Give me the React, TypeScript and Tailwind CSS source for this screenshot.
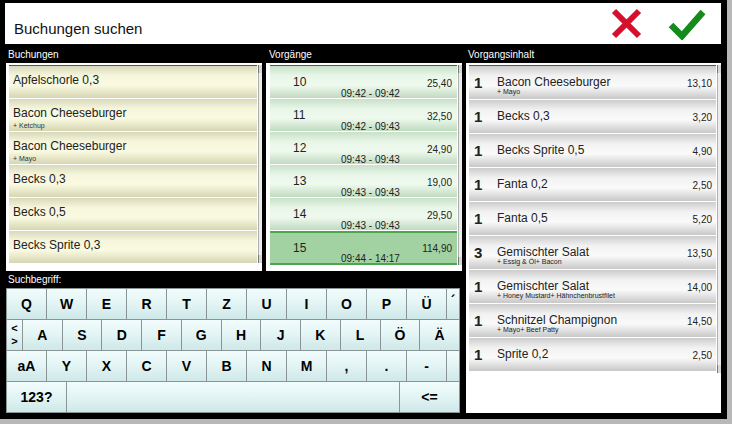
const bookings = [
  { name: "Apfelschorle 0,3" },
  { name: "Bacon Cheeseburger", sub: "+ Ketchup" },
  { name: "Bacon Cheeseburger", sub: "+ Mayo" },
  { name: "Becks 0,3" },
  { name: "Becks 0,5" },
  { name: "Becks Sprite 0,3" },
];

const orders = [
  { nr: "10", time: "09:42 - 09:42", sum: "25,40" },
  { nr: "11", time: "09:42 - 09:43", sum: "32,50" },
  { nr: "12", time: "09:43 - 09:43", sum: "24,90" },
  { nr: "13", time: "09:43 - 09:43", sum: "19,00" },
  { nr: "14", time: "09:43 - 09:43", sum: "29,50" },
  { nr: "15", time: "09:44 - 14:17", sum: "114,90", active: true },
];

const lines = [
  { qty: "1", name: "Bacon Cheeseburger", sub: "+ Mayo", price: "13,10" },
  { qty: "1", name: "Becks 0,3", price: "3,20" },
  { qty: "1", name: "Becks Sprite 0,5", price: "4,90" },
  { qty: "1", name: "Fanta 0,2", price: "2,50" },
  { qty: "1", name: "Fanta 0,5", price: "5,20" },
  { qty: "3", name: "Gemischter Salat", sub: "+ Essig & Öl+ Bacon", price: "13,50" },
  { qty: "1", name: "Gemischter Salat", sub: "+ Honey Mustard+ Hähnchenbrustfilet", price: "14,00" },
  { qty: "1", name: "Schnitzel Champignon", sub: "+ Mayo+ Beef Patty", price: "14,50" },
  { qty: "1", name: "Sprite 0,2", price: "2,50" },
];

const row1 = ["Q", "W", "E", "R", "T", "Z", "U", "I", "O", "P", "Ü"];
const row2 = ["A", "S", "D", "F", "G", "H", "J", "K", "L", "Ö", "Ä"];
const row3 = ["aA", "Y", "X", "C", "V", "B", "N", "M", ",", ".", "-"];

function Key({ label, className }: { label: string; className: string }) {
  return (
    <div
      className={
        "flex h-full items-center justify-center border-r border-b border-[#8a9696] bg-[linear-gradient(to_bottom,#f2fcfc,#e2f4f4_50%,#cfe8e8)] text-[14px] font-bold text-black " +
        className
      }
    >
      {label}
    </div>
  );
}

function Scrollbar() {
  return (
    <div className="ml-[1px] flex h-full w-[4px] flex-col">
      <div className="h-[8px] border-l border-[#777] bg-[#d8d8d8]" />
      <div className="flex-1 border-l border-[#b0b0b0] bg-[#ececec]" />
      <div className="h-[8px] border-l border-[#777] bg-[#d8d8d8]" />
    </div>
  );
}

export default function App() {
  return (
    <div className="h-[424px] w-[732px] overflow-hidden bg-[#b8b8b8] font-['Liberation_Sans',Arial,sans-serif]">
      <div className="flex h-[419px] w-[727px] flex-col bg-black pt-[3px] pl-[5px]">
        <div className="flex h-[41px] w-[716px] items-center bg-white">
          <span className="ml-[9px] mt-[11px] text-[15px] text-[#111]">Buchungen suchen</span>
          <div className="ml-auto mr-[15px] flex items-center gap-[26px]">
            <svg width="31" height="31" viewBox="0 0 31 31">
              <path d="M3 3 L28 28 M28 3 L3 28" stroke="#d4102c" strokeWidth="6" />
            </svg>
            <svg width="38" height="32" viewBox="0 0 38 32">
              <path d="M3 17 L14 28 L35 4" stroke="#168a1c" strokeWidth="6.5" fill="none" />
            </svg>
          </div>
        </div>

        <div className="flex flex-1 pl-[1px]">
          <div className="flex w-[456px] flex-col">
            <div className="flex gap-[4px]">
              <div className="flex w-[256px] flex-col">
                <div className="flex h-[19px] items-center pl-[2px] pt-[1px] text-[10px] text-white">Buchungen</div>
                <div className="flex h-[208px] bg-white pl-[3px] pt-[2px] pb-[8px]">
                  <div className="w-[248px] border-t border-[#555]">
                    {bookings.map((b, i) => (
                      <div
                        key={i}
                        className="h-[33px] border-b border-white bg-[linear-gradient(to_bottom,#d8d8bc,#f6f6dc_30%,#fafae2_60%,#d6d6b2)] pl-[4px] pt-[7px]"
                      >
                        <div className="text-[12px] leading-[15px] text-[#222]">{b.name}</div>
                        {b.sub && <div className="text-[7px] leading-[9px] text-[#333]">{b.sub}</div>}
                      </div>
                    ))}
                  </div>
                  <Scrollbar />
                </div>
              </div>
              <div className="flex w-[196px] flex-col">
                <div className="flex h-[19px] items-center pl-[3px] pt-[1px] text-[10px] text-white">Vorgänge</div>
                <div className="flex h-[208px] bg-white pl-[4px] pt-[2px] pb-[6px]">
                  <div className="w-[187px] border-t border-[#555]">
                    {orders.map((o) =>
                      o.active ? (
                        <div
                          key={o.nr}
                          className="relative h-[34px] border-y-2 border-[#4ea64e] bg-[#a2d2a2] text-[#222]"
                        >
                          <span className="absolute left-[23px] top-[6px] text-[12px]">{o.nr}</span>
                          <span className="absolute right-[5px] top-[8px] text-[10px]">{o.sum}</span>
                          <span className="absolute left-[71px] top-[18px] text-[10px]">{o.time}</span>
                        </div>
                      ) : (
                        <div
                          key={o.nr}
                          className="relative h-[33px] border-b border-white bg-[linear-gradient(to_bottom,#c8e0c8,#e8f6e8_30%,#eefaee_60%,#c0dac0)] text-[#222]"
                        >
                          <span className="absolute left-[23px] top-[7px] text-[12px]">{o.nr}</span>
                          <span className="absolute right-[5px] top-[10px] text-[10px]">{o.sum}</span>
                          <span className="absolute left-[71px] top-[20px] text-[10px]">{o.time}</span>
                        </div>
                      )
                    )}
                  </div>
                  <Scrollbar />
                </div>
              </div>
            </div>

            <div className="flex h-[17px] items-center pl-[2px] text-[10px] text-white">Suchbegriff:</div>

            <div className="flex h-[125px] w-[454px] flex-col border-t border-l border-[#8a9696]">
              <div className="flex h-[31px]">
                {row1.map((k) => (
                  <Key key={k} label={k} className="w-[40px]" />
                ))}
                <Key label="´" className="flex-1 items-start pt-[2px]" />
              </div>
              <div className="flex h-[31px]">
                <div className="flex h-full w-[16px] flex-col items-center justify-center gap-[2px] border-r border-b border-[#8a9696] bg-[linear-gradient(to_bottom,#f2fcfc,#e2f4f4_50%,#cfe8e8)] text-[11px] font-bold leading-[11px]">
                  <span>&lt;</span>
                  <span>&gt;</span>
                </div>
                {row2.map((k) => (
                  <Key key={k} label={k} className="w-[40px]" />
                ))}
              </div>
              <div className="flex h-[31px]">
                {row3.map((k) => (
                  <Key key={k} label={k} className="w-[40px]" />
                ))}
                <Key label="" className="flex-1" />
              </div>
              <div className="flex h-[31px]">
                <Key label="123?" className="w-[60px]" />
                <Key label="" className="flex-1" />
                <Key label="<=" className="w-[60px]" />
              </div>
            </div>
          </div>

          <div className="ml-[4px] flex w-[255px] flex-col">
            <div className="flex h-[19px] items-center pl-[2px] pt-[1px] text-[10px] text-white">Vorgangsinhalt</div>
            <div className="flex h-[350px] bg-white pl-[3px] pt-[2px] pb-[40px]">
              <div className="h-fit w-[248px] border-t border-[#555]">
                {lines.map((l, i) => (
                  <div
                    key={i}
                    className="relative h-[34px] border-b border-white bg-[linear-gradient(to_bottom,#cccccc,#f2f2f2_30%,#fafafa_60%,#c8c8c8)] text-[#222]"
                  >
                    <span className="absolute left-[5px] top-[6px] text-[15px] font-bold">{l.qty}</span>
                    <span className="absolute left-[28px] top-[7px] text-[12px]">{l.name}</span>
                    {l.sub && (
                      <span className="absolute left-[28px] top-[21px] text-[7px]">{l.sub}</span>
                    )}
                    <span className="absolute right-[4px] top-[10px] text-[10px]">{l.price}</span>
                  </div>
                ))}
              </div>
              <Scrollbar />
            </div>
          </div>
        </div>
      </div>
    </div>
  );
}
